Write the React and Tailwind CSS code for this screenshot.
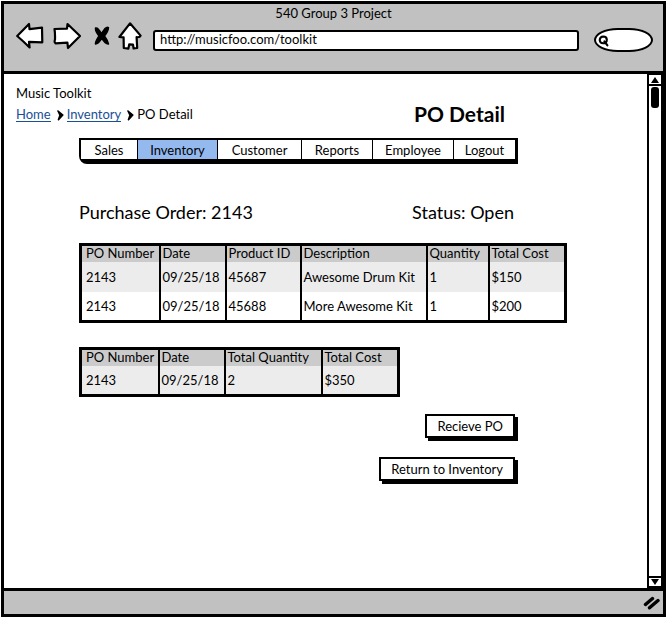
import React from "react";

const tabs = [
  { label: "Sales", width: "w-[57px]" },
  { label: "Inventory", width: "w-20", active: true },
  { label: "Customer", width: "w-[84px]" },
  { label: "Reports", width: "w-[71px]" },
  { label: "Employee", width: "w-[81px]" },
  { label: "Logout", width: "w-[61px]" },
];

const lineItems = {
  columns: [
    { label: "PO Number", width: "w-[79px]" },
    { label: "Date", width: "w-[66px]" },
    { label: "Product ID", width: "w-[75px]" },
    { label: "Description", width: "w-[126px]" },
    { label: "Quantity", width: "w-[62px]" },
    { label: "Total Cost", width: "w-[77px]" },
  ],
  rows: [
    ["2143", "09/25/18", "45687", "Awesome Drum Kit", "1", "$150"],
    ["2143", "09/25/18", "45688", "More Awesome Kit", "1", "$200"],
  ],
};

const totals = {
  columns: [
    { label: "PO Number", width: "w-[78px]" },
    { label: "Date", width: "w-[66px]" },
    { label: "Total Quantity", width: "w-[97px]" },
    { label: "Total Cost", width: "w-[77px]" },
  ],
  rows: [["2143", "09/25/18", "2", "$350"]],
};

function DataTable({ data, width, label }) {
  return (
    <table
      aria-label={label}
      className={`${width} table-fixed border-collapse border-3 border-black text-left whitespace-nowrap`}
    >
      <thead>
        <tr className="h-[17px] bg-[#cbcbcb]">
          {data.columns.map((c) => (
            <th
              key={c.label}
              scope="col"
              className={`${c.width} border-x-2 border-black p-0 pl-0.5 font-normal leading-[14px] align-top first:pl-1`}
            >
              {c.label}
            </th>
          ))}
        </tr>
      </thead>
      <tbody>
        {data.rows.map((row, i) => (
          <tr key={i} className="h-[30px] odd:bg-[#ececec]">
            {row.map((cell, j) => (
              <td key={j} className="border-x-2 border-black p-0 pl-0.5 leading-4 first:pl-1">
                {cell}
              </td>
            ))}
          </tr>
        ))}
      </tbody>
    </table>
  );
}

function IconButton({ label, className, viewBox, children }) {
  return (
    <button type="button" aria-label={label} className={className}>
      <svg
        viewBox={viewBox}
        className="block h-full w-full"
        fill="white"
        stroke="black"
        strokeWidth="2.2"
        strokeLinejoin="round"
        strokeLinecap="round"
      >
        {children}
      </svg>
    </button>
  );
}

function Chevron() {
  return (
    <svg viewBox="0 0 7 11" className="mt-0.5 mr-[3px] ml-1.5 h-[11px] w-[7px]" aria-hidden="true">
      <path d="M1 1 L5.8 5 L1.5 9.6 L3 5.2 Z" fill="black" stroke="black" strokeWidth="1.6" strokeLinejoin="round" />
    </svg>
  );
}

function BrowserBar() {
  return (
    <header className="border-b-3 border-black bg-[#c1c1c1] pt-px pb-5">
      <p className="text-center leading-4">540 Group 3 Project</p>
      <div className="flex h-[30px] items-center pr-2.5 pl-3">
        <IconButton label="Back" className="h-7 w-7" viewBox="0 0 28 28">
          <path d="M1.2 14 L13 2 L13.5 7.2 L26 5.6 L26.3 20.3 L13 19.8 L13.6 25.5 Q7 19 1.2 14 Z" />
        </IconButton>
        <IconButton label="Forward" className="ml-[9px] h-7 w-7" viewBox="0 0 28 28">
          <path d="M1.5 7 L14 6.6 L14.5 2 L27 14 L15 26 L14.4 20.6 L2.5 21.3 Q1 20.5 2 17.5 Q2.2 11 1.5 7 Z" />
        </IconButton>
        <IconButton label="Stop" className="ml-3 h-5 w-[18px]" viewBox="0 0 18 20">
          <path
            d="M2.5 2 Q4.5 1.5 6 4 L8.5 7.5 L12 2.5 Q14 0.5 15.5 1.5 Q15.5 5 11.5 10 Q14.5 14 15.5 18 Q12.5 18.5 8.8 12.5 Q5.5 18 2.5 18 Q2 16 6 10 Q2 5 2.5 2 Z"
            fill="black"
            strokeWidth="1.4"
          />
        </IconButton>
        <IconButton label="Home" className="ml-[7px] h-7 w-6" viewBox="0 0 24 28">
          <path d="M12 1.3 L22.6 13.6 Q22 15.6 18.6 15.2 L19.2 26 L15.6 26.5 L15 22.6 L11.2 22.4 L10.4 26.6 L5.8 26 L5.6 15.4 L1.4 15 Z" />
        </IconButton>
        <input
          type="text"
          aria-label="Address"
          defaultValue="http://musicfoo.com/toolkit"
          className="mt-2 ml-[11px] h-[21px] min-w-0 flex-1 rounded-[3px] border-2 border-black bg-white px-[5px] pb-0.5 leading-4 outline-none"
        />
        <label className="relative mt-2 ml-[15px] block h-6 w-[59px]">
          <input
            type="search"
            aria-label="Search"
            className="h-full w-full rounded-[40%/50%] border-2 border-black bg-white pr-2 pl-4 outline-none"
          />
          <svg
            viewBox="0 0 11 12"
            className="absolute top-[7px] left-1 h-3 w-[11px]"
            fill="none"
            stroke="black"
            strokeWidth="2.1"
            strokeLinecap="round"
            aria-hidden="true"
          >
            <path d="M8.8 4.6 Q9 8 5.5 8.2 Q2 8.4 1.7 5 Q2 1.6 5.2 1.5 Q8.7 1.5 8.8 4.6 Z M6.4 6.4 L9.4 10.4" />
          </svg>
        </label>
      </div>
    </header>
  );
}

function ScrollBar() {
  return (
    <div className="flex w-4 flex-col border-x-2 border-t border-black bg-white" aria-hidden="true">
      <div className="flex h-[11px] items-center justify-center border-b-2 border-black">
        <svg viewBox="0 0 8 6" className="h-1.5 w-2">
          <path d="M4 0 L8 6 L0 6 Z" />
        </svg>
      </div>
      <div className="flex-1 px-0.5 pt-px">
        <div className="h-[21px] rounded-[3px] bg-black" />
      </div>
      <div className="flex h-3 items-center justify-center border-y-2 border-black">
        <svg viewBox="0 0 8 6" className="h-1.5 w-2">
          <path d="M0 0 L8 0 L4 6 Z" />
        </svg>
      </div>
    </div>
  );
}

function PushButton({ children }) {
  return (
    <button
      type="button"
      className="mr-[3px] h-6 border-2 border-black bg-white px-2.5 leading-4 shadow-[3px_3px_0_black]"
    >
      {children}
    </button>
  );
}

export default function App() {
  return (
    <div className="flex min-h-screen flex-col bg-white p-px font-['Lato','Liberation_Sans',sans-serif] text-[13px] text-black">
      <div className="flex flex-1 flex-col border-3 border-black">
        <BrowserBar />
        <div className="flex flex-1">
          <main className="min-w-0 flex-1 pt-[11px] pl-3">
            <p className="leading-4">Music Toolkit</p>
            <div className="flex max-w-[501px] items-center justify-between pr-3">
              <nav aria-label="Breadcrumb" className="flex items-center leading-[14px]">
                <a href="#home" className="border-b border-[#1a4f96] text-[#1a4f96]">Home</a>
                <Chevron />
                <a href="#inventory" className="border-b border-[#1a4f96] text-[#1a4f96]">Inventory</a>
                <Chevron />
                <span>PO Detail</span>
              </nav>
              <h1 className="text-[21px] leading-[26px] font-bold">PO Detail</h1>
            </div>

            <div className="pt-[11px] pl-[63px]">
              <div className="max-w-[439px]">
                <nav
                  aria-label="Main"
                  className="flex h-[26px] w-fit rounded-bl-lg border-2 border-r-3 border-b-5 border-black"
                >
                  {tabs.map((t) => (
                    <a
                      key={t.label}
                      href={`#${t.label.toLowerCase()}`}
                      aria-current={t.active ? "page" : undefined}
                      className={`${t.width} ${t.active ? "bg-[#94b9ef]" : "bg-white"} flex items-center justify-center border-r border-black leading-4 last:border-r-0`}
                    >
                      {t.label}
                    </a>
                  ))}
                </nav>
                <div className="mt-9 flex justify-between pr-1 text-lg leading-6">
                  <h2>Purchase Order: 2143</h2>
                  <p>Status: Open</p>
                </div>
              </div>

              <div className="mt-[19px]">
                <DataTable data={lineItems} width="w-[487px]" label="Purchase order items" />
              </div>
              <div className="mt-6">
                <DataTable data={totals} width="w-[320px]" label="Purchase order totals" />
              </div>

              <div className="mt-[17px] flex max-w-[439px] flex-col items-end gap-[19px]">
                <PushButton>Recieve PO</PushButton>
                <PushButton>Return to Inventory</PushButton>
              </div>
            </div>
          </main>
          <ScrollBar />
        </div>
        <footer className="flex h-[26px] items-center justify-end border-t-3 border-black bg-[#c1c1c1] pr-0.5">
          <svg viewBox="0 0 18 14" className="h-3.5 w-[18px]" stroke="black" strokeWidth="3.4" strokeLinecap="round" aria-hidden="true">
            <path d="M2.5 8.5 L9.5 2.5 M6.5 11.8 L15 4.5" />
          </svg>
        </footer>
      </div>
    </div>
  );
}
